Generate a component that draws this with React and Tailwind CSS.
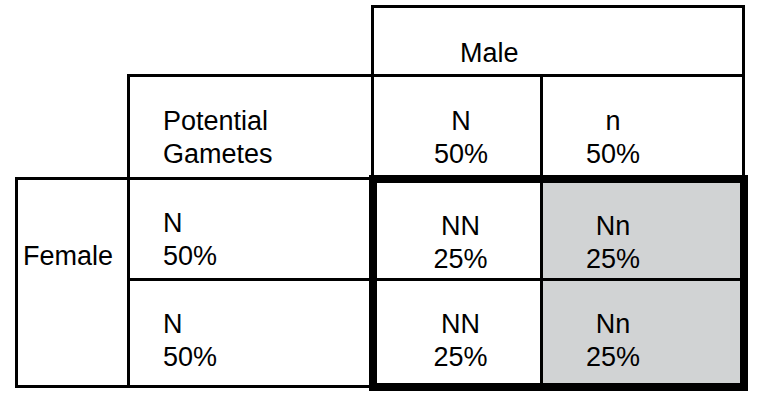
import React from "react";

// Punnett square: Male gametes across the top, Female down the side
const cellText = "text-[27px] leading-[33px] text-black";

function Pair({ top, bottom, center }) {
    return (
        <div className={center ? "inline-block text-center" : "inline-block text-left"}>
            <div>{top}</div>
            <div>{bottom}</div>
        </div>
    );
}

export default function App() {
    return (
        <div className="w-[768px] h-[403px] bg-white overflow-hidden font-['Liberation_Sans',Arial,sans-serif]">
            <table className="table-fixed border-collapse ml-[15px] mt-[5px]">
                <colgroup>
                    <col className="w-[112px]" />
                    <col className="w-[244px]" />
                    <col className="w-[169px]" />
                    <col className="w-[202px]" />
                </colgroup>
                <tbody className={cellText}>
                    <tr className="h-[69px]">
                        <td colSpan={2} className="p-0"></td>
                        <td colSpan={2} className="border-[3px] border-black align-top pt-[29px] pl-[86px]">
                            Male
                        </td>
                    </tr>
                    <tr className="h-[103px]">
                        <td className="p-0"></td>
                        <td className="border-[3px] border-black align-top pt-[28px] pl-[33px]">
                            <Pair top="Potential" bottom="Gametes" />
                        </td>
                        <td className="border-[3px] border-black align-top pt-[28px] pl-[60px]">
                            <Pair top="N" bottom="50%" center />
                        </td>
                        <td className="border-[3px] border-black align-top pt-[28px] pl-[43px]">
                            <Pair top="n" bottom="50%" center />
                        </td>
                    </tr>
                    <tr className="h-[101px]">
                        <td rowSpan={2} className="border-[3px] border-black align-top pt-[60px] pl-[5px]">
                            Female
                        </td>
                        <td className="border-[3px] border-black align-top pt-[27px] pl-[33px]">
                            <Pair top="N" bottom="50%" />
                        </td>
                        <td className="border-[3px] border-t-[8px] border-l-[8px] border-black align-top pt-[27px] pl-[57px]">
                            <Pair top="NN" bottom="25%" center />
                        </td>
                        <td className="border-[3px] border-t-[8px] border-r-[8px] border-black bg-[#d1d3d4] align-top pt-[27px] pl-[43px]">
                            <Pair top="Nn" bottom="25%" center />
                        </td>
                    </tr>
                    <tr className="h-[107px]">
                        <td className="border-[3px] border-black align-top pt-[27px] pl-[33px]">
                            <Pair top="N" bottom="50%" />
                        </td>
                        <td className="border-[3px] border-b-[8px] border-l-[8px] border-black align-top pt-[27px] pl-[57px]">
                            <Pair top="NN" bottom="25%" center />
                        </td>
                        <td className="border-[3px] border-b-[8px] border-r-[8px] border-black bg-[#d1d3d4] align-top pt-[27px] pl-[43px]">
                            <Pair top="Nn" bottom="25%" center />
                        </td>
                    </tr>
                </tbody>
            </table>
        </div>
    );
}
